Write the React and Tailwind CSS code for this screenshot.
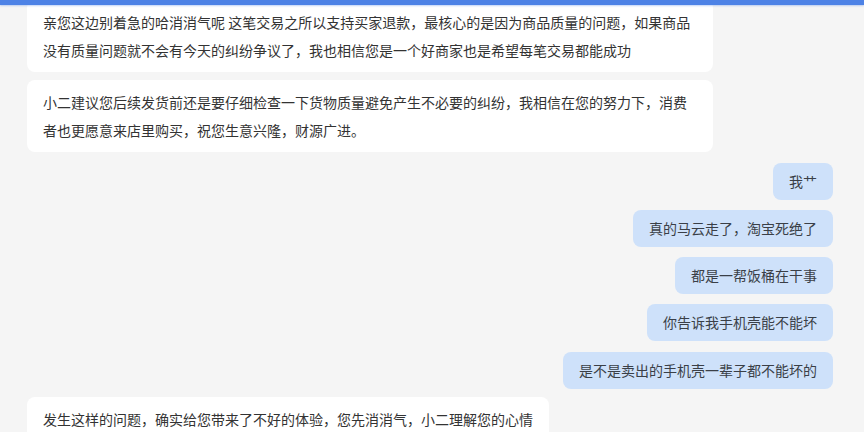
const messages = [
  { from: 'shop', text: '亲您这边别着急的哈消消气呢 这笔交易之所以支持买家退款，最核心的是因为商品质量的问题，如果商品没有质量问题就不会有今天的纠纷争议了，我也相信您是一个好商家也是希望每笔交易都能成功', gap: 'mt-0' },
  { from: 'shop', text: '小二建议您后续发货前还是要仔细检查一下货物质量避免产生不必要的纠纷，我相信在您的努力下，消费者也更愿意来店里购买，祝您生意兴隆，财源广进。', gap: 'mt-2' },
  { from: 'me', text: '我艹', gap: 'mt-[11px]' },
  { from: 'me', text: '真的马云走了，淘宝死绝了', gap: 'mt-2.5' },
  { from: 'me', text: '都是一帮饭桶在干事', gap: 'mt-2.5' },
  { from: 'me', text: '你告诉我手机壳能不能坏', gap: 'mt-2.5' },
  { from: 'me', text: '是不是卖出的手机壳一辈子都不能坏的', gap: 'mt-[11px]' },
  { from: 'shop', text: '发生这样的问题，确实给您带来了不好的体验，您先消消气，小二理解您的心情', gap: 'mt-2' },
];

const Bubble = ({ msg }) => {
  if (msg.from === 'me') {
    return (
      <div className={`${msg.gap} self-end bg-[#cee1fa] rounded-lg px-4 py-2 text-[14px] leading-[21px] text-[#3a3f47]`}>
        {msg.text}
      </div>
    );
  }
  return (
    <div className={`${msg.gap} self-start max-w-[686px] bg-white rounded-lg px-4 py-2 text-[14px] leading-[28px] text-[#333333]`}>
      {msg.text}
    </div>
  );
};

export default function App() {
  return (
    <div
      className="relative h-[432px] w-[864px] overflow-hidden bg-[#f5f5f5]"
      style={{ fontFamily: '"Noto Sans CJK SC", "Microsoft YaHei", sans-serif' }}
    >
      {/* top bar sits over the scrolled list */}
      <div className="absolute top-0 left-0 right-0 z-10 h-[5px] bg-[#4d82e6] shadow-[0_1px_2px_rgba(77,130,230,0.35)]"></div>

      <div className="flex flex-col pl-[27px] pr-[31px]">
        {messages.map((m, i) => (
          <Bubble key={i} msg={m} />
        ))}
      </div>
    </div>
  );
}
